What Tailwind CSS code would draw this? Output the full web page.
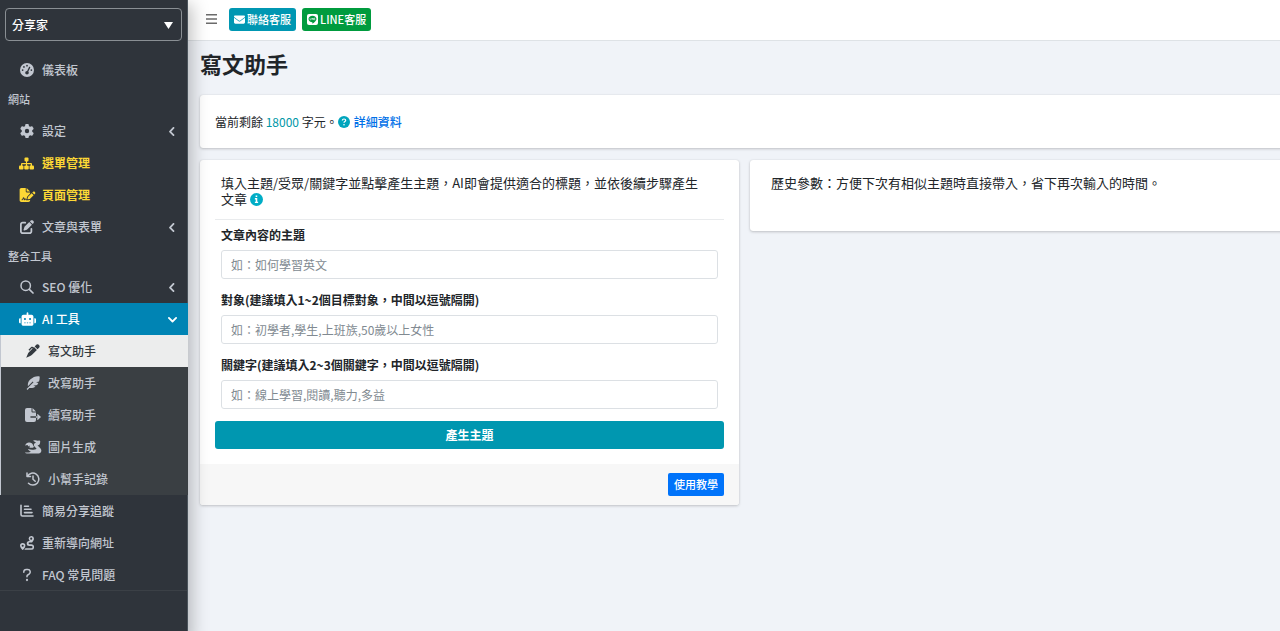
<!DOCTYPE html>
<html lang="zh-Hant">
<head>
<meta charset="utf-8">
<meta name="viewport" content="width=device-width, initial-scale=1">
<title>寫文助手</title>
<script src="https://cdn.jsdelivr.net/npm/@tailwindcss/browser@4"></script>
</head>
<body class="flex min-h-screen overflow-x-hidden bg-[#f0f3f8] font-['Noto_Sans_CJK_TC',sans-serif] text-xs text-[#212529]">

<aside class="relative z-10 w-[188px] shrink-0 border-r border-[#4b545c] bg-[#2f343b] font-medium text-[#c2c7d0] shadow-[0_8px_16px_4px_rgba(0,0,0,0.25)]">
  <div class="relative mt-2 mr-[5px] ml-[5px] mb-[13px]">
    <select aria-label="網站" class="block h-[33px] w-full appearance-none rounded border border-[#8a8f94] bg-transparent px-[6px] text-xs font-medium text-white">
      <option>分享家</option>
    </select>
    <svg class="pointer-events-none absolute top-[14px] right-[9px] h-[7px] w-[9px]" viewBox="0 0 9 7" fill="#fff"><path d="M0 0h9L4.500 7z"/></svg>
  </div>
  <nav>
    <a href="#" class="flex h-8 items-center pl-5">
      <svg class="mr-2 h-[14px] w-[14px]" viewBox="0 0 512 512" fill="currentColor"><path fill-rule="evenodd" d="M0 256a256 256 0 1 1 512 0A256 256 0 1 1 0 256zM288 96a32 32 0 1 0-64 0 32 32 0 1 0 64 0zM256 416c35.300 0 64-28.700 64-64 0-16.200-6-31.100-16-42.300l69.500-138.900c5.900-11.900 1.100-26.300-10.700-32.200s-26.300-1.100-32.200 10.700L261.100 288.200c-1.700-.1-3.400-.2-5.100-.2-35.300 0-64 28.700-64 64s28.700 64 64 64zM176 144a32 32 0 1 0-64 0 32 32 0 1 0 64 0zM96 288a32 32 0 1 0 0-64 32 32 0 1 0 0 64zm352-32a32 32 0 1 0-64 0 32 32 0 1 0 64 0z"/></svg>
      儀表板</a>
    <div class="flex h-[29px] items-center pb-[2px] pl-2 text-[11px]">網站</div>
    <a href="#" class="flex h-8 items-center pr-[11px] pl-5">
      <svg class="mr-2 h-[14px] w-[14px]" viewBox="0 0 512 512" fill="currentColor"><path d="M495.900 166.600c3.200 8.700.5 18.400-6.400 24.600l-43.300 39.400c1.100 8.300 1.700 16.800 1.700 25.400s-.6 17.100-1.700 25.400l43.300 39.400c6.900 6.200 9.600 15.900 6.400 24.600-4.400 11.900-9.700 23.300-15.800 34.300l-4.700 8.100c-6.600 11-14 21.400-22.100 31.200-5.900 7.200-15.700 9.600-24.500 6.800l-55.700-17.700c-13.400 10.300-28.200 18.900-44 25.400l-12.500 57.100c-2 9.100-9 16.300-18.200 17.800-13.800 2.300-28 3.500-42.500 3.500s-28.700-1.200-42.500-3.500c-9.200-1.500-16.200-8.700-18.200-17.800l-12.500-57.100c-15.800-6.500-30.600-15.100-44-25.400l-55.600 17.800c-8.800 2.800-18.600.3-24.500-6.800-8.100-9.800-15.500-20.200-22.100-31.200l-4.700-8.100c-6.100-11-11.400-22.400-15.800-34.300-3.200-8.700-.5-18.400 6.400-24.600l43.300-39.400c-1.100-8.400-1.700-16.900-1.700-25.500s.6-17.100 1.700-25.400L22.400 191.200c-6.900-6.200-9.600-15.900-6.400-24.600 4.400-11.900 9.700-23.300 15.800-34.300l4.700-8.100c6.600-11 14-21.400 22.100-31.200 5.900-7.200 15.700-9.600 24.500-6.800l55.700 17.700c13.400-10.300 28.200-18.900 44-25.400l12.500-57.100c2-9.100 9-16.300 18.200-17.800C227.300 1.200 241.500 0 256 0s28.700 1.200 42.500 3.500c9.200 1.500 16.200 8.700 18.200 17.800l12.500 57.100c15.800 6.500 30.600 15.100 44 25.400l55.700-17.700c8.800-2.800 18.600-.3 24.500 6.800 8.100 9.800 15.500 20.200 22.100 31.200l4.700 8.100c6.100 11 11.400 22.400 15.800 34.300zM256 336a80 80 0 1 0 0-160 80 80 0 1 0 0 160z"/></svg>
      設定
      <svg class="ml-auto h-[9px] w-[8px]" viewBox="0 0 8 9" fill="none" stroke="currentColor" stroke-width="1.800" stroke-linecap="round" stroke-linejoin="round"><path d="M5.500.9 2 4.600l3.500 3.500"/></svg></a>
    <a href="#" class="flex h-8 items-center pl-5 font-bold text-[#fdd835]">
      <svg class="mr-2 -ml-px h-[13px] w-[15px]" viewBox="0 0 30 26" fill="currentColor"><rect x="11" y="1" width="8" height="8" rx="2"/><path d="M14 8h2v4h8a2 2 0 0 1 2 2v4h-2.500v-3.500H16V18h-2v-3.500H6.500V18H4v-4a2 2 0 0 1 2-2h8z"/><rect x="0" y="17" width="9" height="8" rx="2"/><rect x="10.500" y="17" width="9" height="8" rx="2"/><rect x="21" y="17" width="9" height="8" rx="2"/></svg>
      選單管理</a>
    <a href="#" class="flex h-8 items-center pl-5 font-bold text-[#fdd835]">
      <svg class="mr-[6px] -ml-px h-[14px] w-[17px]" viewBox="0 0 576 512" fill="currentColor"><path d="M64 0C28.700 0 0 28.700 0 64v384c0 35.300 28.700 64 64 64h256c35.300 0 64-28.700 64-64v-19.200c-5.100 2.800-10.600 4.900-16.300 6.400l-60.100 15c-3.500.9-7.100 1.300-10.700 1.300-1.200 0-2.400 0-3.600-.1H240c-6.100 0-11.600-3.400-14.300-8.800l-8.800-17.700c-1.700-3.400-5.100-5.500-8.800-5.500s-7.200 2.100-8.800 5.500l-8.800 17.700c-2.900 5.900-9.200 9.400-15.700 8.800s-12.100-5.100-13.900-11.300L144 381l-9.800 32.800c-6.100 20.300-24.800 34.200-46 34.200H80c-8.800 0-16-7.200-16-16s7.200-16 16-16h8.200c7.100 0 13.300-4.600 15.300-11.400l14.900-49.500c3.400-11.300 13.800-19.100 25.600-19.100s22.200 7.700 25.600 19.100l11.600 38.600c7.400-6.200 16.800-9.700 26.800-9.700 15.900 0 30.400 9 37.500 23.200l4.400 8.800h8.900c-3.100-8.800-3.700-18.400-1.400-27.800l15-60.100c2.800-11.300 8.600-21.500 16.800-29.700L384 203.600V160H256c-17.700 0-32-14.300-32-32V0zm192 0v128h128zm293.800 139.700c-15.600-15.600-40.900-15.600-56.600 0l-29.400 29.400 71 71 29.400-29.400c15.600-15.600 15.600-40.900 0-56.600zM311.900 321c-4.100 4.100-7 9.200-8.400 14.900l-15 60.100c-1.400 5.500.2 11.200 4.200 15.200s9.700 5.600 15.200 4.200l60.100-15c5.600-1.400 10.800-4.300 14.900-8.400l129.200-129.300-71-71z"/></svg>
      頁面管理</a>
    <a href="#" class="flex h-8 items-center pr-[11px] pl-5">
      <svg class="mr-2 h-[14px] w-[14px]" viewBox="0 0 512 512" fill="currentColor"><path d="M471.600 21.700c-21.900-21.900-57.300-21.900-79.200 0l-30.100 30 97.900 97.900 30.100-30.100c21.900-21.900 21.900-57.300 0-79.200zM172.400 241.700c-6.100 6.100-10.800 13.600-13.500 21.900l-29.600 88.800c-2.900 8.600-.6 18.100 5.800 24.600s15.900 8.700 24.600 5.800l88.800-29.600c8.200-2.700 15.700-7.400 21.900-13.500l167.200-167.400-97.900-97.900zM96 64c-53 0-96 43-96 96v256c0 53 43 96 96 96h256c53 0 96-43 96-96v-96a32 32 0 1 0-64 0v96c0 17.700-14.300 32-32 32H96c-17.700 0-32-14.300-32-32V160c0-17.700 14.300-32 32-32h96a32 32 0 1 0 0-64z"/></svg>
      文章與表單
      <svg class="ml-auto h-[9px] w-[8px]" viewBox="0 0 8 9" fill="none" stroke="currentColor" stroke-width="1.800" stroke-linecap="round" stroke-linejoin="round"><path d="M5.500.9 2 4.600l3.500 3.500"/></svg></a>
    <div class="flex h-7 items-center pb-[2px] pl-2 text-[11px]">整合工具</div>
    <a href="#" class="flex h-8 items-center pr-[11px] pl-5">
      <svg class="mr-2 h-[14px] w-[14px]" viewBox="0 0 14 14" fill="none" stroke="currentColor" stroke-linecap="round"><circle cx="5.700" cy="5.700" r="4.700" stroke-width="1.500"/><path d="m9.300 9.300 3.700 3.700" stroke-width="1.700"/></svg>
      SEO 優化
      <svg class="ml-auto h-[9px] w-[8px]" viewBox="0 0 8 9" fill="none" stroke="currentColor" stroke-width="1.800" stroke-linecap="round" stroke-linejoin="round"><path d="M5.500.9 2 4.600l3.500 3.500"/></svg></a>
    <a href="#" class="-mr-px flex h-8 items-center bg-[#0084b4] pr-[11px] pl-[19px] text-white">
      <svg class="mr-[6px] h-[14px] w-[17px]" viewBox="0 0 640 512" fill="currentColor"><path fill-rule="evenodd" d="M320 0c17.700 0 32 14.300 32 32v64h120c39.800 0 72 32.200 72 72v272c0 39.800-32.200 72-72 72H168c-39.800 0-72-32.200-72-72V168c0-39.800 32.200-72 72-72h120V32c0-17.700 14.300-32 32-32zM208 384c-8.800 0-16 7.200-16 16s7.200 16 16 16h32c8.800 0 16-7.200 16-16s-7.200-16-16-16zm96 0c-8.800 0-16 7.200-16 16s7.200 16 16 16h32c8.800 0 16-7.200 16-16s-7.200-16-16-16zm96 0c-8.800 0-16 7.200-16 16s7.200 16 16 16h32c8.800 0 16-7.200 16-16s-7.200-16-16-16zM264 256a40 40 0 1 0-80 0 40 40 0 1 0 80 0zm152 40a40 40 0 1 0 0-80 40 40 0 1 0 0 80zM48 224h16v192H48c-26.500 0-48-21.500-48-48v-96c0-26.500 21.500-48 48-48zm544 0c26.500 0 48 21.500 48 48v96c0 26.500-21.500 48-48 48h-16V224z"/></svg>
      AI 工具
      <svg class="ml-auto h-2 w-[9px]" viewBox="0 0 9 8" fill="none" stroke="currentColor" stroke-width="1.800" stroke-linecap="round" stroke-linejoin="round"><path d="M.9 2.900 4.500 6.500l3.600-3.600"/></svg></a>
    <div class="-mr-px border-l border-[#c2c7d0] bg-[#3a3f43]">
      <a href="#" class="flex h-8 items-center bg-[#eceded] pl-[25px] text-[#343a40]">
        <svg class="mr-2 h-[14px] w-[14px]" viewBox="0 0 14 14" fill="currentColor"><path d="M9.800 1.200c1-1.300 2.400-1.100 3.200-.3s1 2.200-.2 3.200L11.500 5.200 8.700 2.500zM8 3.100l2.900 2.800-4.600 4.700c-.8.800-1.600 1.300-2.700 1.600L.2 13.800l1.500-3.600c.3-.9.700-1.500 1.400-2.200l3.500-3.500-.6-.5-2.600 2.700-.9-.9L5.200 3c.5-.5 1.200-.5 1.700 0l.6.600z"/></svg>
        寫文助手</a>
      <a href="#" class="flex h-8 items-center pl-[25px]">
        <svg class="mr-2 h-[14px] w-[14px]" viewBox="0 0 14 14" fill="currentColor"><path d="M13.600.4C10.300-.2 7 1 4.200 3.600 2.300 5.400 1.600 7.500 1.900 10.300L6.700 5.500l.8.800-6.900 6.800.8.800 1.900-1.900c2.600.3 4.600-.2 6.200-1.500l-2.200-.8 3.800-.8c.5-.6.900-1.200 1.200-1.900l-2.200-.7 2.900-.9c.6-1.700.8-3.500.6-5z"/></svg>
        改寫助手</a>
      <a href="#" class="flex h-8 items-center pl-6">
        <svg class="mr-[7px] h-[14px] w-4" viewBox="0 0 16 14" fill="currentColor"><path d="M2 0h4.500v3.500a1 1 0 0 0 1 1H11v3.700H6a.8.8 0 0 0 0 1.600h5V12a2 2 0 0 1-2 2H2a2 2 0 0 1-2-2V2a2 2 0 0 1 2-2zM7.500 0 11 3.500H7.500z"/><path d="M11 8.200h2l-1.200-1.300 1-1L16 9l-3.200 3.100-1-1L13 9.800h-2z"/></svg>
        續寫助手</a>
      <a href="#" class="flex h-8 items-center pl-6">
        <svg class="mr-[6px] h-[14px] w-[17px]" viewBox="0 0 17 14" fill="currentColor"><path d="M8 .7c2-.8 3.600-.6 4.700 0l1.300-.2c.9 0 1.400.8 1.200 1.600L14.800 4c-.4.900-1.300 1.100-2.300 1.300l1.800 1.900c2 1.500 2.600 3.800 1.500 5-.7 1-1.600 1.300-3 1.300H3c-1.700 0-2.800-.4-3-1 2.500 0 4.500-.1 5.900-.8C4.500 11.100 3.500 10.300 3 9c3.300 1.200 7 .8 8.600-.3L9.500 6.400C8.200 4.900 9 3.200 11 2.600z"/><path d="M0 5.400c1-2.100 2.500-3.100 4.300-2.900 2 .1 3.300 1.200 3.700 2.600l1 1.800c-1 .8-2.500 1.200-4.500.8l.2-2.200-1.300 1L2.500 5z"/></svg>
        圖片生成</a>
      <a href="#" class="flex h-8 items-center pl-[25px]">
        <svg class="mr-2 h-[14px] w-[14px]" viewBox="0 0 14 14" fill="none" stroke="currentColor" stroke-width="1.500" stroke-linecap="round" stroke-linejoin="round"><path d="M1 1v3.500h3.500M1.500 4.300a6 6 0 1 1 1 7M7 4v3.200l2.200 2.100"/></svg>
        小幫手記錄</a>
    </div>
    <a href="#" class="flex h-8 items-center pl-5">
      <svg class="mr-2 h-[14px] w-[14px]" viewBox="0 0 14 14" fill="none" stroke="currentColor" stroke-width="1.600" stroke-linecap="round" stroke-linejoin="round"><path d="M1 1.300v9.200a1.500 1.500 0 0 0 1.500 1.500H13M4.500 2.200h4M4.500 5.200h6.500M4.500 8.600h7.500"/></svg>
      簡易分享追蹤</a>
    <a href="#" class="flex h-8 items-center pl-5">
      <svg class="mr-2 h-[14px] w-[14px]" viewBox="0 0 14 14" fill="currentColor"><path fill-rule="evenodd" d="M11.200 0A2.700 2.700 0 0 1 14 2.700c0 1.200-1.300 3-2 3.800H9.200a.9.900 0 0 0 0 1.700h2.100a2.800 2.800 0 0 1 0 5.600H4.300l1.200-1.500h5.800a1.200 1.200 0 0 0 0-2.400H9.200a2.500 2.500 0 0 1 0-5h.5c-.6-.9-1.100-1.700-1.100-2.300A2.700 2.700 0 0 1 11.200 0zm0 1.600a1 1 0 1 0 0 2.100 1 1 0 0 0 0-2.100zM2.700 7a2.700 2.700 0 0 1 2.700 2.700c0 1.300-1.500 3.100-2.300 4.100a.6.600 0 0 1-.8 0C1.500 12.800 0 11 0 9.700A2.700 2.700 0 0 1 2.700 7zm0 1.700a1 1 0 1 0 0 2.100 1 1 0 0 0 0-2.100z"/></svg>
      重新導向網址</a>
    <a href="#" class="flex h-8 items-center border-b border-[#3b4046] pl-5">
      <svg class="mr-2 h-[14px] w-[14px]" viewBox="0 0 14 14" fill="none" stroke="currentColor" stroke-width="1.500" stroke-linecap="round" stroke-linejoin="round"><path d="M3.800 4.200V3.800A2.400 2.400 0 0 1 6.200 1.500h1.600a2.500 2.500 0 0 1 1.300 4.600L7.700 7c-.5.300-.7.700-.7 1.200v.5"/><circle cx="7" cy="12" r=".4"/></svg>
      FAQ 常見問題</a>
  </nav>
</aside>

<div class="min-w-0 flex-1">
  <header class="flex h-[41px] items-center border-b border-[#dee2e6] bg-white pb-[2px] pl-[18px]">
    <button type="button" aria-label="選單" class="mr-3 text-[#6b6b6b]">
      <svg class="block h-[10px] w-[11px]" viewBox="0 0 11 10" fill="currentColor"><path d="M0 0h11v1.500H0zM0 4.200h11v1.500H0zM0 8.400h11v1.500H0z"/></svg>
    </button>
    <button type="button" class="mr-[6px] flex h-[23px] items-center rounded-[3px] bg-[#0097b2] px-[5px] text-[11px] font-medium text-white">
      <svg class="mr-[2px] h-[11px] w-[11px]" viewBox="0 0 512 512" fill="currentColor"><path d="M48 64C21.500 64 0 85.500 0 112c0 15.100 7.100 29.300 19.200 38.400l217.600 163.200c11.400 8.500 27 8.500 38.400 0l217.600-163.200c12.100-9.100 19.200-23.300 19.200-38.400 0-26.500-21.500-48-48-48zM0 176v208c0 35.300 28.700 64 64 64h384c35.300 0 64-28.700 64-64V176L294.400 339.200c-22.800 17.100-54 17.100-76.800 0z"/></svg>
      聯絡客服</button>
    <button type="button" class="flex h-[23px] items-center rounded-[3px] bg-[#009b3e] px-[5px] text-[11px] font-medium text-white">
      <svg class="mr-[2px] h-[11px] w-[11px]" viewBox="0 0 22 22"><rect width="22" height="22" rx="4" fill="#fff"/><path d="M11 3.500c4.600 0 8 2.900 8 6.400 0 3.300-4.500 7-7.700 9.100-.7.400-.9 0-.7-.8l.2-1.700C6.400 16.400 3 13.600 3 9.900c0-3.500 3.500-6.400 8-6.400z" fill="#009b3e"/><path d="M6 8v3.500h2M9.300 8v3.500M11 11.500V8l2 3.500V8M16.500 8h-1.700v3.500h1.700M14.800 9.800h1.500" fill="none" stroke="#fff"/></svg>
      LINE客服</button>
  </header>

  <main class="-mr-[9px] pl-3">
    <h1 class="flex h-[54px] items-center pb-2 text-[22px] font-bold">寫文助手</h1>

    <section class="flex h-[53px] items-center rounded-[3px] bg-white px-[15px] shadow-[0_0_1px_rgba(0,0,0,0.13),0_1px_3px_rgba(0,0,0,0.2)]">
      <p class="flex items-center">當前剩餘&nbsp;<span class="text-[#0097a7]">18000</span>&nbsp;字元。
        <svg class="mr-1 h-3 w-3" viewBox="0 0 12 12"><circle cx="6" cy="6" r="6" fill="#00a5bd"/><path d="M4.300 4.500c.1-1 .8-1.500 1.700-1.500s1.700.5 1.700 1.400C7.700 5.500 6 5.500 6 6.800" fill="none" stroke="#fff" stroke-width="1.200"/><circle cx="6" cy="8.700" r=".8" fill="#fff"/></svg>
        <a href="#" class="font-medium text-[#0070e8]">詳細資料</a></p>
    </section>

    <div class="mt-3 grid grid-cols-2 items-start gap-[11px]">
      <section class="overflow-hidden rounded-[3px] bg-white shadow-[0_0_1px_rgba(0,0,0,0.13),0_1px_3px_rgba(0,0,0,0.2)]">
        <form class="px-[15px] pt-[15px] pb-[15px]">
          <h2 class="border-b border-[#e9ebed] px-[6px] pb-3 text-[13px] leading-4">填入主題/受眾/關鍵字並點擊產生主題，AI即會提供適合的標題，並依後續步驟產生<br>文章
            <svg class="inline-block h-[13px] w-[13px] align-[-2px]" viewBox="0 0 12 12"><circle cx="6" cy="6" r="6" fill="#00adc6"/><path d="M5.200 2.300h1.500v1.400H5.200zM4.500 4.700h2.200v3.400h.8v1.200h-3V8.100h.8V5.900h-.8z" fill="#fff"/></svg></h2>
          <div class="flex flex-col px-[6px]">
            <label for="topic" class="py-[6px] leading-[18px] font-bold">文章內容的主題</label>
            <input id="topic" type="text" placeholder="如：如何學習英文" class="h-[29px] w-full rounded-[3px] border border-[#dce0e4] px-[9px] text-xs placeholder:text-[#818a91]">
            <label for="audience" class="mt-[6px] py-[6px] leading-[18px] font-bold">對象(建議填入1~2個目標對象，中間以逗號隔開)</label>
            <input id="audience" type="text" placeholder="如：初學者,學生,上班族,50歲以上女性" class="h-[29px] w-full rounded-[3px] border border-[#dce0e4] px-[9px] text-xs placeholder:text-[#818a91]">
            <label for="keywords" class="mt-[6px] py-[6px] leading-[18px] font-bold">關鍵字(建議填入2~3個關鍵字，中間以逗號隔開)</label>
            <input id="keywords" type="text" placeholder="如：線上學習,閱讀,聽力,多益" class="h-[29px] w-full rounded-[3px] border border-[#dce0e4] px-[9px] text-xs placeholder:text-[#818a91]">
          </div>
          <button type="button" class="mt-3 h-7 w-full rounded-[3px] bg-[#0097b0] text-xs font-bold text-white">產生主題</button>
        </form>
        <footer class="flex justify-end bg-[#f7f7f7] px-[15px] py-[9px]">
          <button type="button" class="h-[23px] rounded-[2px] bg-[#0073fa] px-[6px] text-[11px] font-medium text-white">使用教學</button>
        </footer>
      </section>

      <section class="rounded-[3px] bg-white px-[21px] pt-[15px] pb-10 shadow-[0_0_1px_rgba(0,0,0,0.13),0_1px_3px_rgba(0,0,0,0.2)]">
        <h2 class="text-[13px] leading-4">歷史參數：方便下次有相似主題時直接帶入，省下再次輸入的時間。</h2>
      </section>
    </div>
  </main>
</div>
</body>
</html>
